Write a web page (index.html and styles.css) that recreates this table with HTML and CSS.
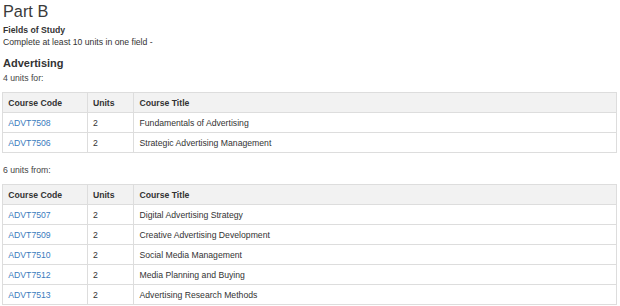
FILE: index.html
```html
<!DOCTYPE html>
<html>
<head>
<meta charset="utf-8">
<link rel="stylesheet" href="styles.css">
</head>
<body>
<div class="page">
  <h1 class="title">Part B</h1>
  <div class="subhead">Fields of Study</div>
  <div class="note">Complete at least 10 units in one field -</div>
  <h2 class="field">Advertising</h2>
  <div class="rule rule-first">4 units for:</div>
  <table class="courses">
    <thead>
      <tr><th class="c-code">Course Code</th><th class="c-units">Units</th><th>Course Title</th></tr>
    </thead>
    <tbody>
      <tr><td><a href="#">ADVT7508</a></td><td>2</td><td>Fundamentals of Advertising</td></tr>
      <tr><td><a href="#">ADVT7506</a></td><td>2</td><td>Strategic Advertising Management</td></tr>
    </tbody>
  </table>
  <div class="rule">6 units from:</div>
  <table class="courses">
    <thead>
      <tr><th class="c-code">Course Code</th><th class="c-units">Units</th><th>Course Title</th></tr>
    </thead>
    <tbody>
      <tr><td><a href="#">ADVT7507</a></td><td>2</td><td>Digital Advertising Strategy</td></tr>
      <tr><td><a href="#">ADVT7509</a></td><td>2</td><td>Creative Advertising Development</td></tr>
      <tr><td><a href="#">ADVT7510</a></td><td>2</td><td>Social Media Management</td></tr>
      <tr><td><a href="#">ADVT7512</a></td><td>2</td><td>Media Planning and Buying</td></tr>
      <tr><td><a href="#">ADVT7513</a></td><td>2</td><td>Advertising Research Methods</td></tr>
    </tbody>
  </table>
</div>
</body>
</html>
```

FILE: styles.css
```css
html, body {
  margin: 0;
  padding: 0;
  background: #ffffff;
}
body {
  font-family: "Liberation Sans", Arial, sans-serif;
  color: #333333;
  font-size: 8.67px;
  overflow: hidden;
}
.page {
  padding: 2px 3px 0 2px;
}
.title {
  margin: 0 0 0 1px;
  font-size: 16.3px;
  line-height: 18px;
  font-weight: normal;
  color: #3a3a3a;
}
.subhead {
  margin: 4px 0 0 1px;
  font-weight: bold;
  line-height: 12px;
}
.note {
  margin: 0 0 0 1px;
  line-height: 12px;
}
.field {
  margin: 7.7px 0 0 1px;
  font-size: 11px;
  line-height: 14px;
  font-weight: bold;
}
.rule {
  margin: 10.5px 0 0 1px;
  line-height: 12px;
  color: #444444;
}
.rule.rule-first {
  margin-top: 2.3px;
}
.courses {
  margin-top: 8.5px;
  width: 615px;
  border-collapse: collapse;
  border: 1px solid #dddddd;
}
.courses th,
.courses td {
  border: 1px solid #dddddd;
  padding: 3.5px 5.3px;
  line-height: 12px;
  text-align: left;
  vertical-align: top;
}
.courses th {
  background: #f2f2f2;
  font-weight: bold;
}
.courses .c-code {
  width: 73px;
}
.courses .c-units {
  width: 35px;
}
.courses a {
  color: #3a7bbd;
  text-decoration: none;
}
```
